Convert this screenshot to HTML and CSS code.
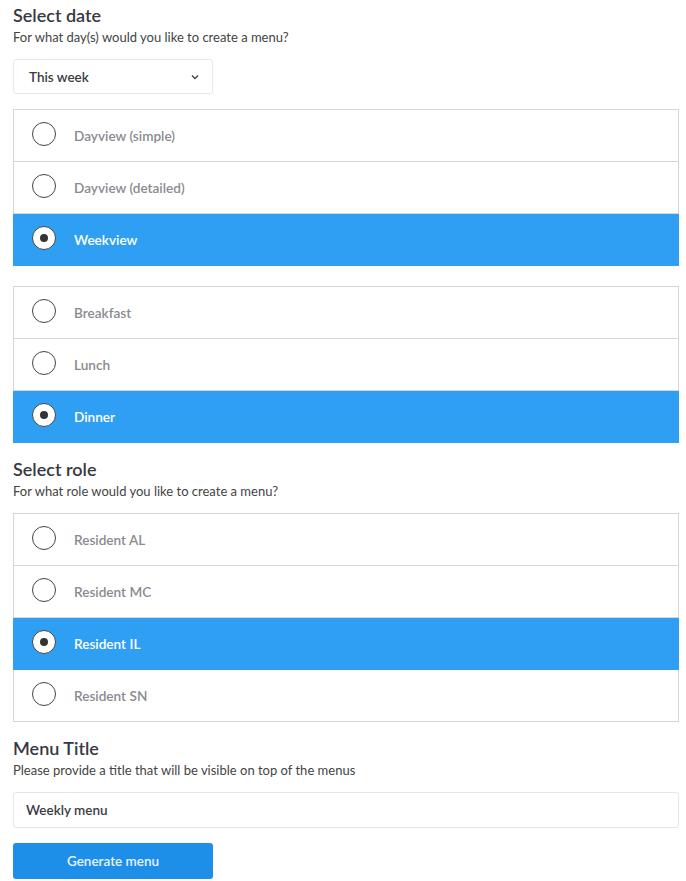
FILE: index.html
```html
<!DOCTYPE html>
<html>
<head>
<meta charset="utf-8">
<link rel="stylesheet" href="styles.css">
</head>
<body>
<div class="page">
  <section class="group">
    <h2 class="title">Select date</h2>
    <p class="sub">For what day(s) would you like to create a menu?</p>
    <div class="select">
      <span>This week</span>
      <svg class="chev" width="8" height="6" viewBox="0 0 8 6"><path d="M1 1.5 L4 4.5 L7 1.5" fill="none" stroke="#444" stroke-width="1.4"/></svg>
    </div>
    <ul class="list">
      <li class="item"><span class="radio"></span><span class="label">Dayview (simple)</span></li>
      <li class="item"><span class="radio"></span><span class="label">Dayview (detailed)</span></li>
      <li class="item active"><span class="radio"></span><span class="label">Weekview</span></li>
    </ul>
    <ul class="list">
      <li class="item"><span class="radio"></span><span class="label">Breakfast</span></li>
      <li class="item"><span class="radio"></span><span class="label">Lunch</span></li>
      <li class="item active"><span class="radio"></span><span class="label">Dinner</span></li>
    </ul>
  </section>
  <section class="group">
    <h2 class="title">Select role</h2>
    <p class="sub">For what role would you like to create a menu?</p>
    <ul class="list list-tight">
      <li class="item"><span class="radio"></span><span class="label">Resident AL</span></li>
      <li class="item"><span class="radio"></span><span class="label">Resident MC</span></li>
      <li class="item active"><span class="radio"></span><span class="label">Resident IL</span></li>
      <li class="item"><span class="radio"></span><span class="label">Resident SN</span></li>
    </ul>
  </section>
  <section class="group">
    <h2 class="title">Menu Title</h2>
    <p class="sub">Please provide a title that will be visible on top of the menus</p>
    <div class="input">Weekly menu</div>
    <button class="btn">Generate menu</button>
  </section>
</div>
</body>
</html>
```
FILE: styles.css
```css
html, body {
  margin: 0;
  padding: 0;
  background: #fff;
}
body {
  font-family: "Lato", "Noto Sans", sans-serif;
  color: #3b3b45;
}
.page {
  padding: 4px 7px 0 13px;
}
.group {
  margin-bottom: 15px;
}
.title {
  margin: 0;
  font-size: 18px;
  font-weight: 600;
  line-height: 23px;
  color: #383842;
}
.sub {
  margin: 0;
  font-size: 13px;
  line-height: 20px;
  color: #444;
}
.select {
  margin-top: 12px;
  width: 200px;
  height: 35px;
  box-sizing: border-box;
  border: 1px solid #e8e8e8;
  border-radius: 3px;
  display: flex;
  align-items: center;
  justify-content: space-between;
  padding: 0 13px 0 15px;
  font-size: 13.5px;
  font-weight: 600;
  color: #3b3b45;
}
.chev {
  display: block;
}
.list {
  list-style: none;
  margin: 15px 0 0;
  padding: 0;
  border: 1px solid #d6d6d6;
  border-bottom: none;
}
.list + .list {
  margin-top: 20px;
}
.list-tight {
  margin-top: 12px;
}
.item {
  height: 52px;
  box-sizing: border-box;
  border-bottom: 1px solid #d6d6d6;
  display: flex;
  align-items: center;
  padding-left: 18px;
  gap: 18px;
}
.item.active {
  background: #2f9ff3;
  border-bottom-color: #2f9ff3;
  margin: 0 -1px;
  padding-left: 19px;
}
.radio {
  width: 24px;
  height: 24px;
  box-sizing: border-box;
  border: 1.5px solid #444;
  border-radius: 50%;
  background: #fff;
  display: flex;
  align-items: center;
  justify-content: center;
  margin-top: -4px;
}
.active .radio::after {
  content: "";
  width: 8px;
  height: 8px;
  border-radius: 50%;
  background: #333;
}
.label {
  font-size: 13.6px;
  font-weight: 600;
  color: #8a8a8f;
}
.active .label {
  color: #fff;
}
.input {
  margin-top: 12px;
  height: 36px;
  box-sizing: border-box;
  border: 1px solid #e6e6e6;
  border-radius: 3px;
  display: flex;
  align-items: center;
  padding-left: 12px;
  font-size: 13.5px;
  font-weight: 600;
  color: #3b3b45;
}
.btn {
  margin-top: 15px;
  width: 200px;
  height: 36px;
  border: none;
  border-radius: 3px;
  background: #1e8fe8;
  color: #e9f4fe;
  font-family: inherit;
  font-size: 13.5px;
  font-weight: 600;
  display: block;
}
```
